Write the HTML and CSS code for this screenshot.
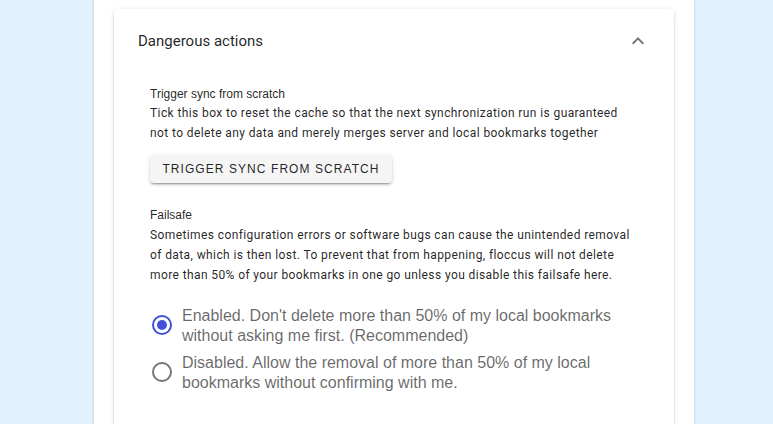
FILE: index.html
```html
<!DOCTYPE html>
<html lang="en">
<head>
<meta charset="utf-8">
<title>Dangerous actions</title>
<link rel="stylesheet" href="styles.css">
</head>
<body>
<div class="column">
  <div class="panel">
    <div class="panel-header">
      <span class="panel-title">Dangerous actions</span>
      <svg class="chevron" viewBox="0 0 24 24" width="24" height="24"><path d="M7.41,15.41L12,10.83L16.59,15.41L18,14L12,8L6,14L7.41,15.41Z"/></svg>
    </div>
    <div class="panel-content">
      <div class="label">Trigger sync from scratch</div>
      <div class="caption">Tick this box to reset the cache so that the next synchronization run is guaranteed not to delete any data and merely merges server and local bookmarks together</div>
      <button class="btn" type="button">Trigger sync from scratch</button>

      <div class="label failsafe">Failsafe</div>
      <div class="caption">Sometimes configuration errors or software bugs can cause the unintended removal of data, which is then lost. To prevent that from happening, floccus will not delete more than 50% of your bookmarks in one go unless you disable this failsafe here.</div>

      <div class="radio-group">
        <div class="radio">
          <svg class="radio-icon on" viewBox="0 0 24 24" width="24" height="24"><circle cx="12" cy="12" r="9" fill="none" stroke-width="2"/><circle class="dot" cx="12" cy="12" r="5"/></svg>
          <span class="radio-label">Enabled. Don't delete more than 50% of my local bookmarks without asking me first. (Recommended)</span>
        </div>
        <div class="radio">
          <svg class="radio-icon" viewBox="0 0 24 24" width="24" height="24"><circle cx="12" cy="12" r="9" fill="none" stroke-width="2"/></svg>
          <span class="radio-label">Disabled. Allow the removal of more than 50% of my local bookmarks without confirming with me.</span>
        </div>
      </div>
    </div>
  </div>
</div>
</body>
</html>
```

FILE: styles.css
```css
html, body {
  margin: 0;
  padding: 0;
  height: 100%;
  overflow: hidden;
}
body {
  background: #e1f1fe;
  font-family: Roboto, "Liberation Sans", Arial, sans-serif;
  color: rgba(0, 0, 0, 0.87);
}
.column {
  width: 600px;
  margin-left: 94px;
  min-height: 100%;
  box-sizing: border-box;
  background: #fff;
  padding: 9px 20px 0 20px;
  box-shadow: 0 0 3px rgba(0, 0, 0, 0.18);
}
.panel {
  background: #fff;
  border-radius: 4px;
  box-shadow: 0 3px 1px -2px rgba(0,0,0,.2), 0 2px 2px 0 rgba(0,0,0,.14), 0 1px 5px 0 rgba(0,0,0,.12);
  min-height: 460px;
}
.panel-header {
  height: 64px;
  padding: 0 24px;
  display: flex;
  align-items: center;
  justify-content: space-between;
}
.panel-title {
  font-size: 15px;
  color: rgba(0, 0, 0, 0.87);
}
.chevron {
  fill: rgba(0, 0, 0, 0.54);
}
.panel-content {
  padding: 12px 36px 16px 36px;
}
.label {
  font-family: "Liberation Sans", Arial, sans-serif;
  font-size: 12px;
  line-height: 18px;
  color: rgba(0, 0, 0, 0.87);
}
.label.failsafe {
  margin-top: 23px;
  margin-bottom: 1px;
}
.caption {
  font-size: 12px;
  line-height: 20px;
  letter-spacing: 0.0333em;
  color: rgba(0, 0, 0, 0.87);
}
.btn {
  display: block;
  margin-top: 12px;
  height: 28px;
  padding: 0 12.4px;
  border: none;
  border-radius: 4px;
  background: #f5f5f5;
  font-family: "Liberation Sans", Arial, sans-serif;
  font-size: 12px;
  font-weight: 400;
  letter-spacing: 0.0892em;
  text-transform: uppercase;
  color: rgba(0, 0, 0, 0.87);
  box-shadow: 0 3px 1px -2px rgba(0,0,0,.2), 0 2px 2px 0 rgba(0,0,0,.14), 0 1px 5px 0 rgba(0,0,0,.12);
}
.radio-group {
  margin-top: 19px;
  display: flex;
  flex-direction: column;
  gap: 5px;
}
.radio {
  display: flex;
  align-items: center;
}
.radio-icon {
  flex: none;
  margin-right: 8px;
  stroke: rgba(0, 0, 0, 0.54);
}
.radio-icon.on {
  stroke: #3f51d8;
}
.radio-icon .dot {
  fill: #3f51d8;
  stroke: none;
}
.radio-label {
  font-family: "Liberation Sans", Arial, sans-serif;
  font-size: 16px;
  line-height: 20px;
  color: rgba(0, 0, 0, 0.6);
  max-width: 450px;
  padding-top: 2px;
}
```
